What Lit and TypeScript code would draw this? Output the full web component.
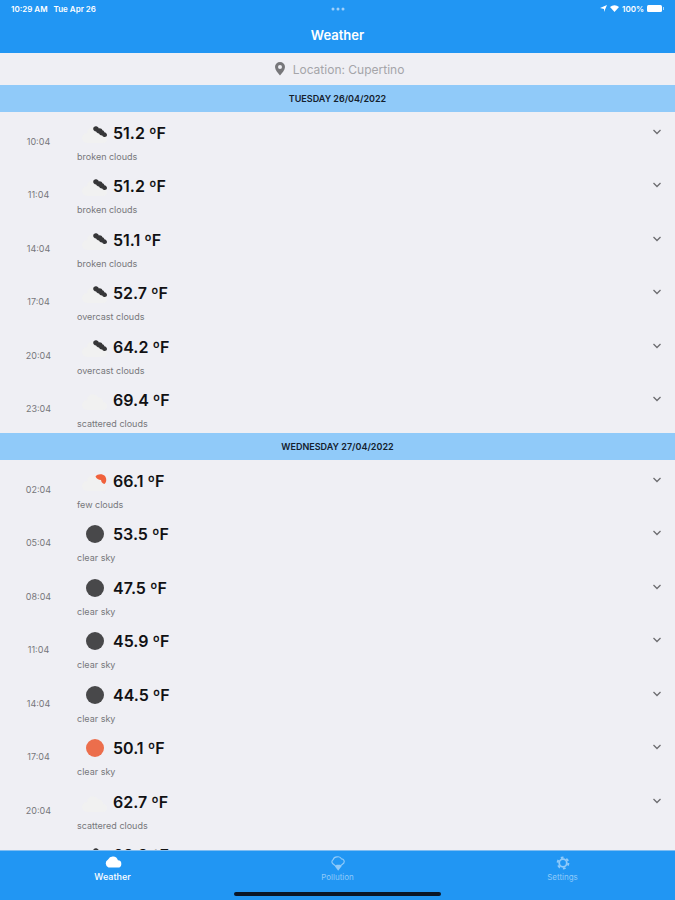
import { LitElement, html, css, svg, nothing } from "lit";
import { customElement, property, state } from "lit/decorators.js";
import { classMap } from "lit/directives/class-map.js";

type Sky = "broken" | "scattered" | "few" | "night" | "day";

interface Forecast {
  time: string;
  temp: string;
  text: string;
  sky: Sky;
}

interface Day {
  title: string;
  rows: Forecast[];
}

const f = (time: string, temp: string, text: string, sky: Sky): Forecast => ({ time, temp, text, sky });

const DAYS: Day[] = [
  {
    title: "TUESDAY 26/04/2022",
    rows: [
      f("10:04", "51.2", "broken clouds", "broken"),
      f("11:04", "51.2", "broken clouds", "broken"),
      f("14:04", "51.1", "broken clouds", "broken"),
      f("17:04", "52.7", "overcast clouds", "broken"),
      f("20:04", "64.2", "overcast clouds", "broken"),
      f("23:04", "69.4", "scattered clouds", "scattered"),
    ],
  },
  {
    title: "WEDNESDAY 27/04/2022",
    rows: [
      f("02:04", "66.1", "few clouds", "few"),
      f("05:04", "53.5", "clear sky", "night"),
      f("08:04", "47.5", "clear sky", "night"),
      f("11:04", "45.9", "clear sky", "night"),
      f("14:04", "44.5", "clear sky", "night"),
      f("17:04", "50.1", "clear sky", "day"),
      f("20:04", "62.7", "scattered clouds", "scattered"),
      f("23:04", "68.3", "broken clouds", "broken"),
    ],
  },
];

const cloud = svg`<path fill="#f1f1f1" d="M7 25a5 5 0 0 1 0-10 6 6 0 0 1 11-3 5 5 0 0 1 5 5 4 4 0 0 1 0 8z"/>`;

const SKY = {
  broken: svg`${cloud}<path fill="#363638" d="M13.200 10.500c.2-1.800 2-2.800 3.800-2 1 .4 1.600 1.100 1.900 1.900 1.500-.4 3 .3 3.500 1.800 1.200.2 1.800 1 1.900 2 1.500.3 2.700 1.400 2.700 2.800 0 1.500-1.500 2.300-2.900 1.900-.9-.3-1.500-.8-1.900-1.500-1.500.1-2.700-.7-3.200-2-1.300.1-2.400-.6-2.900-1.800-1.700-.2-3-1.500-2.900-3.100z"/>`,
  scattered: cloud,
  few: svg`${cloud}<path fill="#f0613c" d="M15.500 10.500c2-3 7-3 9.500-.5 2 3 1.500 6.500-.5 8-2-.3-3-1.500-3.500-4-2.500-.3-4.500-1-5.500-3.500z"/>`,
  night: svg`<circle cx="15" cy="15" r="9" fill="#48484a"/>`,
  day: svg`<circle cx="15" cy="15" r="9" fill="#ec6e4c"/>`,
};

@customElement("forecast-row")
export class ForecastRow extends LitElement {
  @property({ attribute: false }) item!: Forecast;
  @state() private open = false;

  static styles = css`
    :host {
      display: block;
    }
    .row {
      box-sizing: border-box;
      width: 100%;
      height: 53px;
      display: grid;
      grid-template-columns: 77px 1fr 36px;
      padding: 0;
      border: 0;
      background: none;
      color: inherit;
      font: inherit;
      text-align: left;
      cursor: pointer;
    }
    .time {
      padding-top: 24px;
      text-align: center;
      font-size: 9px;
      line-height: 12px;
      color: #77777b;
    }
    .main {
      padding-top: 6px;
    }
    .reading {
      display: flex;
      align-items: center;
      gap: 3px;
      padding-left: 3px;
      font-size: 16px;
      line-height: 30px;
      font-weight: 600;
      color: #111113;
    }
    .sky {
      width: 30px;
      height: 30px;
    }
    .text {
      display: block;
      margin-top: 3px;
      font-size: 9px;
      line-height: 12px;
      color: #77777b;
    }
    .chevron {
      width: 10px;
      height: 10px;
      justify-self: center;
      margin-top: 15px;
    }
  `;

  render() {
    const { time, temp, text, sky } = this.item;
    return html`
      <button class="row" aria-expanded=${this.open} @click=${() => (this.open = !this.open)}>
        <span class="time">${time}</span>
        <span class="main">
          <span class="reading">
            <svg class="sky" viewBox="0 0 30 30" aria-hidden="true">${SKY[sky]}</svg>${temp} ºF
          </span>
          <span class="text">${text}</span>
        </span>
        <svg class="chevron" viewBox="0 0 10 10" aria-hidden="true">
          <path d="M1.500 3l3.500 3.500L8.500 3" fill="none" stroke="#6d6d70" stroke-width="1.300" />
        </svg>
      </button>
    `;
  }
}

const TABS = [
  {
    name: "Weather",
    icon: svg`<path fill="currentColor" d="M15.500 7a6 6 0 0 0-11-1A5 5 0 0 0 5 15h10a4 4 0 0 0 .5-8z"/>`,
  },
  {
    name: "Pollution",
    icon: svg`<path fill="none" stroke="currentColor" stroke-width="1.300" stroke-linejoin="round" d="M7.500 13.500L4 10.500a2.500 2.500 0 0 1 .5-4A4.500 4.500 0 0 1 9 3.200a4.500 4.500 0 0 1 5 2.300 3 3 0 0 1 2.500 4.500l-4 3.500"/><path fill="currentColor" d="M6.500 13.500l2-1.500h4l1.500 1.500-3.800 5z"/>`,
  },
  {
    name: "Settings",
    icon: svg`<g fill="none" stroke="currentColor"><circle cx="10" cy="10" r="4.200" stroke-width="2"/><circle cx="10" cy="10" r="6" stroke-width="2.200" stroke-dasharray="3 3.283"/></g>`,
  },
];

@customElement("app-root")
export class AppRoot extends LitElement {
  @state() private tab = "Weather";

  static styles = css`
    :host {
      display: flex;
      flex-direction: column;
      height: 100vh;
      background: #efeff4;
      font-family: Inter, "Liberation Sans", sans-serif;
      color: #111113;
    }
    header {
      flex: none;
      background: #2196f3;
      color: #fff;
    }
    .status {
      display: grid;
      grid-template-columns: 1fr auto 1fr;
      align-items: center;
      height: 17px;
      padding: 0 11px;
      font-size: 8px;
      font-weight: 600;
    }
    .clock {
      display: flex;
      gap: 6px;
    }
    .dots {
      width: 14px;
      height: 4px;
      fill: #9fd0fa;
    }
    .power {
      display: flex;
      justify-content: flex-end;
      align-items: center;
      gap: 3px;
    }
    .arrow {
      width: 7px;
      height: 7px;
    }
    .wifi {
      width: 9px;
      height: 7px;
    }
    .battery {
      width: 17px;
      height: 7px;
    }
    h1 {
      margin: 0;
      height: 36px;
      font-size: 13px;
      line-height: 36px;
      font-weight: 600;
      text-align: center;
    }
    .location {
      flex: none;
      display: flex;
      justify-content: center;
      align-items: center;
      gap: 8px;
      height: 32px;
      padding-left: 4px;
      font-size: 12px;
      color: #a5a5a9;
    }
    .pin {
      width: 10px;
      height: 14px;
    }
    main {
      flex: 1;
      min-height: 0;
      overflow: auto;
      scrollbar-width: none;
    }
    h2 {
      margin: 0;
      background: #90caf9;
      font-size: 9px;
      line-height: 27px;
      font-weight: 600;
      text-align: center;
      color: #14202c;
    }
    ul {
      margin: 0;
      padding: 0;
      list-style: none;
    }
    li:nth-child(even) {
      padding-bottom: 1px;
    }
    footer {
      flex: none;
      background: #2196f3;
      border-top: 1px solid #7fbdf2;
    }
    nav {
      display: grid;
      grid-template-columns: repeat(3, 1fr);
    }
    .tab {
      display: flex;
      flex-direction: column;
      align-items: center;
      padding: 3px 0 0;
      border: 0;
      background: none;
      font: inherit;
      font-size: 8px;
      line-height: 10px;
      color: #90caf9;
      cursor: pointer;
    }
    .tab.active {
      font-size: 9px;
      font-weight: 500;
      color: #fff;
    }
    .glyph {
      width: 18px;
      height: 18px;
    }
    .home {
      width: 207px;
      height: 4px;
      margin: 10px auto 4px;
      border-radius: 2px;
      background: #0a1626;
    }
  `;

  render() {
    return html`
      <header>
        <div class="status">
          <div class="clock"><span>10:29 AM</span><span>Tue Apr 26</span></div>
          <svg class="dots" viewBox="0 0 14 4" aria-hidden="true">
            <circle cx="2" cy="2" r="1.500" /><circle cx="7" cy="2" r="1.500" /><circle cx="12" cy="2" r="1.500" />
          </svg>
          <div class="power">
            <svg class="arrow" viewBox="0 0 7 7" aria-hidden="true"><path fill="#fff" d="M7 0L4 7V4L0 3z" /></svg>
            <svg class="wifi" viewBox="0 0 9 7" aria-hidden="true">
              <path fill="#fff" d="M0 2a7 7 0 0 1 9 0L4.500 7z" />
            </svg>
            <span>100%</span>
            <svg class="battery" viewBox="0 0 17 7" aria-hidden="true">
              <rect width="15" height="7" rx="1.500" fill="#fff" /><rect x="16" y="2" width="1" height="3" fill="#a6d5fa" />
            </svg>
          </div>
        </div>
        <h1>Weather</h1>
      </header>
      <div class="location">
        <svg class="pin" viewBox="0 0 10 14" aria-hidden="true">
          <path fill="#77777a" fill-rule="evenodd" d="M5 0a5 5 0 0 1 5 5c0 3-3 6-5 8.500C3 11 0 8 0 5a5 5 0 0 1 5-5zm0 3a2 2 0 1 0 0 4 2 2 0 0 0 0-4z" />
        </svg>
        <span>Location: Cupertino</span>
      </div>
      <main>
        ${DAYS.map(
          (day) => html`
            <section>
              <h2>${day.title}</h2>
              <ul>
                ${day.rows.map((row) => html`<li><forecast-row .item=${row}></forecast-row></li>`)}
              </ul>
            </section>
          `
        )}
      </main>
      <footer>
        <nav>
          ${TABS.map(
            ({ name, icon }) => html`
              <button
                class=${classMap({ tab: true, active: this.tab === name })}
                aria-current=${this.tab === name ? "page" : nothing}
                @click=${() => (this.tab = name)}
              >
                <svg class="glyph" viewBox="0 0 20 20" aria-hidden="true">${icon}</svg>
                ${name}
              </button>
            `
          )}
        </nav>
        <div class="home"></div>
      </footer>
    `;
  }
}
